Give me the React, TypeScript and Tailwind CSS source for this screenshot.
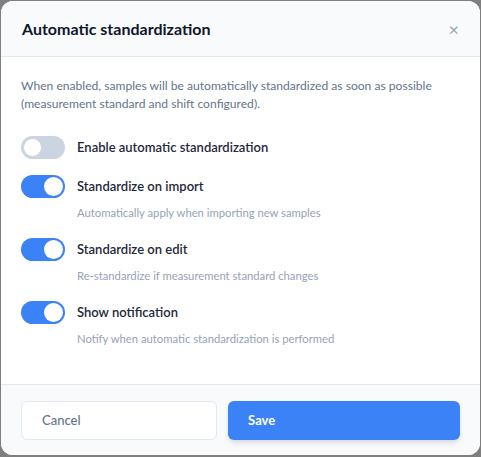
import React, { useState } from "react";

function Toggle({ on, onClick }: { on: boolean; onClick: () => void }) {
  return (
    <button
      onClick={onClick}
      className={`relative flex h-[23px] w-[44px] shrink-0 items-center rounded-full px-[2px] ${on ? "bg-[#3b82f6] justify-end" : "bg-[#cbd5e1] justify-start"}`}
    >
      <span className={`block h-[19px] w-[19px] rounded-full bg-white ${on ? "" : "border border-[#d1d5db]"}`} />
    </button>
  );
}

export default function App() {
  const [s, setS] = useState([false, true, true, true]);
  const flip = (i: number) => setS(s.map((v, j) => (j === i ? !v : v)));
  const font = { fontFamily: 'Lato, "Noto Sans", sans-serif' };
  return (
    <div className="h-[457px] w-[481px] bg-[#7f7f7f] pl-px pt-px" style={font}>
      <div className="flex h-[454px] w-[479px] flex-col overflow-hidden rounded-[12px] bg-white">
        <div className="flex h-[56px] shrink-0 items-center justify-between border-b border-[#e2e8f0] bg-[#f8fafc] pl-[21px] pr-[21px]">
          <h2 className="text-[16px] font-bold text-[#0f172a]">Automatic standardization</h2>
          <span className="text-[18px] leading-none text-[#94a3b8]">×</span>
        </div>
        <div className="flex flex-1 flex-col px-[20px] pt-[20px]">
          <p className="text-[12.1px] leading-[18px] text-[#64748b]">
            When enabled, samples will be automatically standardized as soon as possible (measurement standard and shift configured).
          </p>
          <div className="mt-[23px] flex items-center gap-[12px]">
            <Toggle on={s[0]} onClick={() => flip(0)} />
            <span className="text-[13px] font-semibold text-[#1e293b]">Enable automatic standardization</span>
          </div>
          <div className="mt-[16px] flex items-center gap-[12px]">
            <Toggle on={s[1]} onClick={() => flip(1)} />
            <span className="text-[13px] font-semibold text-[#1e293b]">Standardize on import</span>
          </div>
          <p className="ml-[56px] mt-[7px] text-[11.25px] leading-[16px] text-[#94a3b8]">Automatically apply when importing new samples</p>
          <div className="mt-[17px] flex items-center gap-[12px]">
            <Toggle on={s[2]} onClick={() => flip(2)} />
            <span className="text-[13px] font-semibold text-[#1e293b]">Standardize on edit</span>
          </div>
          <p className="ml-[56px] mt-[7px] text-[11.25px] leading-[16px] text-[#94a3b8]">Re-standardize if measurement standard changes</p>
          <div className="mt-[17px] flex items-center gap-[12px]">
            <Toggle on={s[3]} onClick={() => flip(3)} />
            <span className="text-[13px] font-semibold text-[#1e293b]">Show notification</span>
          </div>
          <p className="ml-[56px] mt-[7px] text-[11.25px] leading-[16px] text-[#94a3b8]">Notify when automatic standardization is performed</p>
        </div>
        <div className="flex h-[71px] shrink-0 gap-[11px] border-t border-[#e2e8f0] bg-[#f8fafc] px-[20px] pt-[16px]">
          <button className="h-[39px] w-[197px] rounded-[6px] border border-[#e2e8f0] bg-white pl-[20px] text-left text-[13px] font-medium text-[#64748b]">Cancel</button>
          <button className="h-[39px] w-[233px] rounded-[6px] bg-[#3b82f6] pl-[20px] text-left text-[13px] font-bold text-white shadow-md">Save</button>
        </div>
      </div>
    </div>
  );
}
